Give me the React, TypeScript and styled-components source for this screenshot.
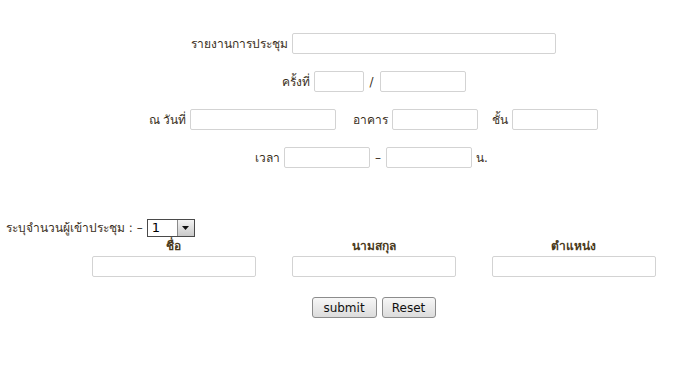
import React from "react";
import styled, { createGlobalStyle } from "styled-components";

const GlobalStyle = createGlobalStyle`
    html, body {
        margin: 0;
        padding: 0;
        background: #fff;
    }
    body {
        font-family: Tahoma, "DejaVu Sans", "Noto Sans", sans-serif;
        font-size: 12px;
        color: #3a301c;
    }
`;

export default function App() {
    return (
        <>
            <GlobalStyle />
            <Page>
                <FormBlock>
                    <Row>
                        <Label>รายงานการประชุม</Label>
                        <TextBox $w={264} />
                    </Row>
                    <Row>
                        <Label>ครั้งที่</Label>
                        <TextBox $w={50} />
                        <Sep>/</Sep>
                        <TextBox $w={86} />
                    </Row>
                    <Row>
                        <Label>ณ วันที่</Label>
                        <TextBox $w={146} />
                        <Label $ml={17}>อาคาร</Label>
                        <TextBox $w={86} />
                        <Label $ml={14}>ชั้น</Label>
                        <TextBox $w={86} />
                    </Row>
                    <Row>
                        <Label>เวลา</Label>
                        <TextBox $w={86} />
                        <Sep>–</Sep>
                        <TextBox $w={86} />
                        <Label $ml={4}>น.</Label>
                    </Row>
                </FormBlock>

                <CountRow>
                    ระบุจำนวนผู้เข้าประชุม : –
                    <FakeSelect>
                        <SelectValue>1</SelectValue>
                        <SelectArrow>
                            <svg width="7" height="4" viewBox="0 0 7 4">
                                <path d="M0 0h7L3.5 4z" fill="#111" />
                            </svg>
                        </SelectArrow>
                    </FakeSelect>
                </CountRow>

                <People>
                    <Head>ชื่อ</Head>
                    <Head>นามสกุล</Head>
                    <Head>ตำแหน่ง</Head>
                    <Cell>
                        <TextBox $w={164} />
                    </Cell>
                    <Cell>
                        <TextBox $w={164} />
                    </Cell>
                    <Cell>
                        <TextBox $w={164} />
                    </Cell>
                </People>

                <Buttons>
                    <Btn $w={65}>submit</Btn>
                    <Btn $w={54}>Reset</Btn>
                </Buttons>
            </Page>
        </>
    );
}

const Page = styled.div`
    width: 100%;
    padding-top: 33px;
`;

/* content is centred a little right of the window centre */
const FormBlock = styled.div`
    display: flex;
    flex-direction: column;
    align-items: center;
    gap: 17px;
    padding-left: 57px;
`;

const Row = styled.div`
    display: flex;
    align-items: center;
    justify-content: center;
    height: 21px;
`;

const Label = styled.span<{ $ml?: number }>`
    margin-left: ${(p) => p.$ml ?? 0}px;
    margin-right: 4px;
    white-space: nowrap;
`;

const Sep = styled.span`
    width: 16px;
    text-align: center;
`;

const TextBox = styled.input.attrs({ type: "text" })<{ $w: number }>`
    width: ${(p) => p.$w}px;
    height: 21px;
    box-sizing: border-box;
    border: 1px solid #d3d3d3;
    border-radius: 2px;
    background: #fff;
    padding: 0 3px;
    margin: 0;
    font: inherit;
    outline: none;
`;

const CountRow = styled.div`
    display: flex;
    align-items: center;
    gap: 4px;
    margin-top: 50px;
    padding-left: 6px;
    white-space: nowrap;
`;

const FakeSelect = styled.div`
    display: flex;
    width: 48px;
    height: 18px;
    box-sizing: border-box;
    border: 1px solid #4a4a4a;
    background: #fff;
`;

const SelectValue = styled.span`
    flex: 1;
    padding-left: 4px;
    line-height: 16px;
    font-size: 13px;
    color: #000;
`;

const SelectArrow = styled.span`
    width: 16px;
    display: flex;
    align-items: center;
    justify-content: center;
    border-left: 1px solid #8a8a8a;
    background: linear-gradient(#f4f4f4, #c9c9c9);
`;

const People = styled.div`
    display: grid;
    grid-template-columns: repeat(3, 200px);
    justify-content: center;
    row-gap: 1px;
    padding-left: 57px;
`;

const Head = styled.div`
    text-align: center;
    font-weight: bold;
    color: #4a3a1b;
    line-height: 18px;
`;

const Cell = styled.div`
    display: flex;
    justify-content: center;
`;

const Buttons = styled.div`
    display: flex;
    justify-content: center;
    gap: 5px;
    margin-top: 20px;
    padding-left: 57px;
`;

const Btn = styled.button<{ $w: number }>`
    width: ${(p) => p.$w}px;
    height: 21px;
    padding: 0;
    border: 1px solid #8c8c8c;
    border-radius: 3px;
    background: linear-gradient(#f7f7f7, #dcdcdc);
    font-family: "DejaVu Sans", sans-serif;
    font-size: 12px;
    color: #111;
`;
